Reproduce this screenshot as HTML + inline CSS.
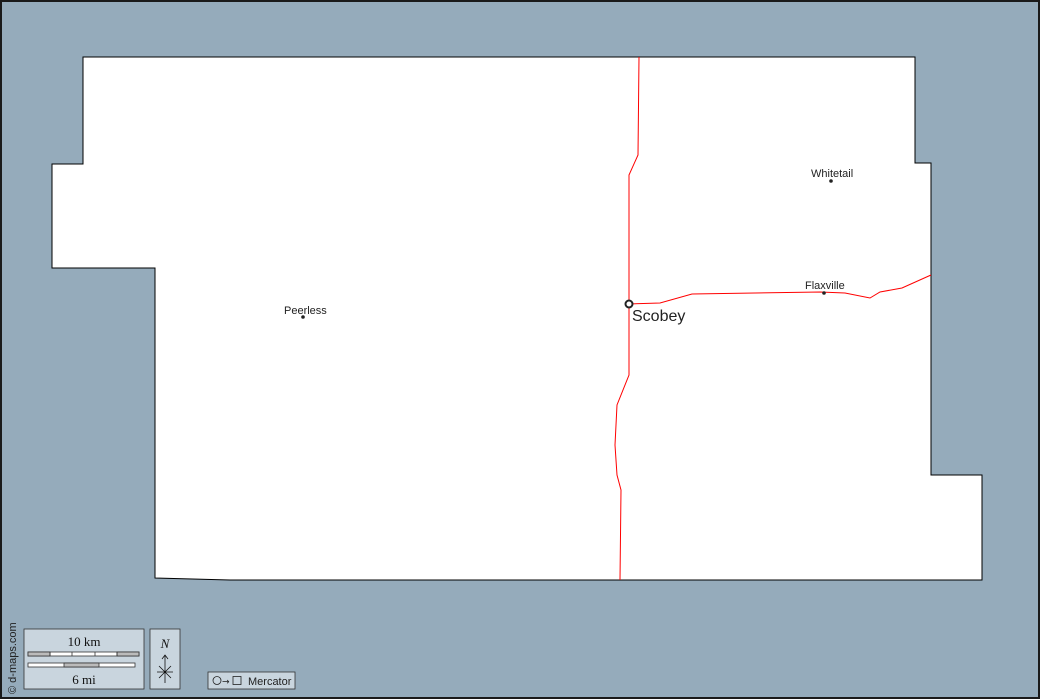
<!DOCTYPE html>
<html><head><meta charset="utf-8"><style>
html,body{margin:0;padding:0;}
body{width:1040px;height:699px;overflow:hidden;background:#95abbb;}
</style></head><body>
<svg width="1040" height="699" viewBox="0 0 1040 699" xmlns="http://www.w3.org/2000/svg" style="display:block">
<rect x="1" y="1" width="1038" height="697" fill="#95abbb" stroke="#1a1a1a" stroke-width="2"/>
<path d="M83,57 L915,57 L915,163 L931,163 L931,475 L982,475 L982,580 L230,580 L155,578 L155,268 L52,268 L52,164 L83,164 Z" fill="#fff" stroke="#000" stroke-width="1"/>
<g fill="none" stroke="#ff0000" stroke-width="1">
<path d="M639,57 L638,155 L629,175 L629,300 L629,375 L617,405 L615,445 L617,475 L621,490 L620,580"/>
<path d="M629,304 L660,303 L692,294 L820,292 L845,293 L870,298 L880,292 L902,288 L931,275"/>
</g>
<circle cx="629" cy="304" r="3.5" fill="#fff" stroke="#222" stroke-width="2"/>
<circle cx="831" cy="181" r="1.8" fill="#222"/>
<circle cx="824" cy="293" r="1.8" fill="#222"/>
<circle cx="303" cy="317" r="1.8" fill="#222"/>
<g font-family="Liberation Sans, sans-serif" fill="#222">
<text x="811" y="177" font-size="11">Whitetail</text>
<text x="805" y="289" font-size="11">Flaxville</text>
<text x="284" y="314" font-size="11">Peerless</text>
<text x="632" y="321" font-size="16">Scobey</text>
<text transform="translate(16,694) rotate(-90)" font-size="11">© d-maps.com</text>
</g>
<rect x="24" y="629" width="120" height="60" fill="#c9d5de" stroke="#333" stroke-width="0.8"/>
<text x="84" y="646" font-family="Liberation Serif, serif" font-size="13" text-anchor="middle" fill="#111">10 km</text>
<text x="84" y="684" font-family="Liberation Serif, serif" font-size="13" text-anchor="middle" fill="#111">6 mi</text>
<rect x="28" y="652" width="111" height="4" fill="#fff" stroke="#333" stroke-width="0.8"/>
<rect x="28" y="652" width="22" height="4" fill="#bbb" stroke="#333" stroke-width="0.8"/>
<rect x="117" y="652" width="22" height="4" fill="#bbb" stroke="#333" stroke-width="0.8"/>
<path d="M50,652v4M72,652v4M95,652v4M117,652v4" stroke="#333" stroke-width="0.8"/>
<rect x="28" y="663" width="107" height="4" fill="#fff" stroke="#333" stroke-width="0.8"/>
<rect x="64" y="663" width="35" height="4" fill="#bbb" stroke="#333" stroke-width="0.8"/>
<rect x="150" y="629" width="30" height="60" fill="#c9d5de" stroke="#333" stroke-width="0.8"/>
<text x="165" y="648" font-family="Liberation Serif, serif" font-style="italic" font-size="13" text-anchor="middle" fill="#111">N</text>
<path d="M165,655 V683 M162,659 L165,655 L168,659 M157,672 H173 M159,666 L171,678 M171,666 L159,678" stroke="#111" stroke-width="0.8" fill="none"/>
<rect x="208" y="672" width="87" height="17" fill="#c9d5de" stroke="#333" stroke-width="0.8"/>
<circle cx="217" cy="680.5" r="4" fill="none" stroke="#222" stroke-width="0.8"/>
<text x="222" y="684.5" font-family="DejaVu Sans, sans-serif" font-size="9" fill="#222">→</text>
<rect x="233" y="676.5" width="8" height="8" fill="none" stroke="#222" stroke-width="0.8"/>
<text x="248" y="685" font-family="Liberation Sans, sans-serif" font-size="11" fill="#222">Mercator</text>
</svg>
</body></html>
